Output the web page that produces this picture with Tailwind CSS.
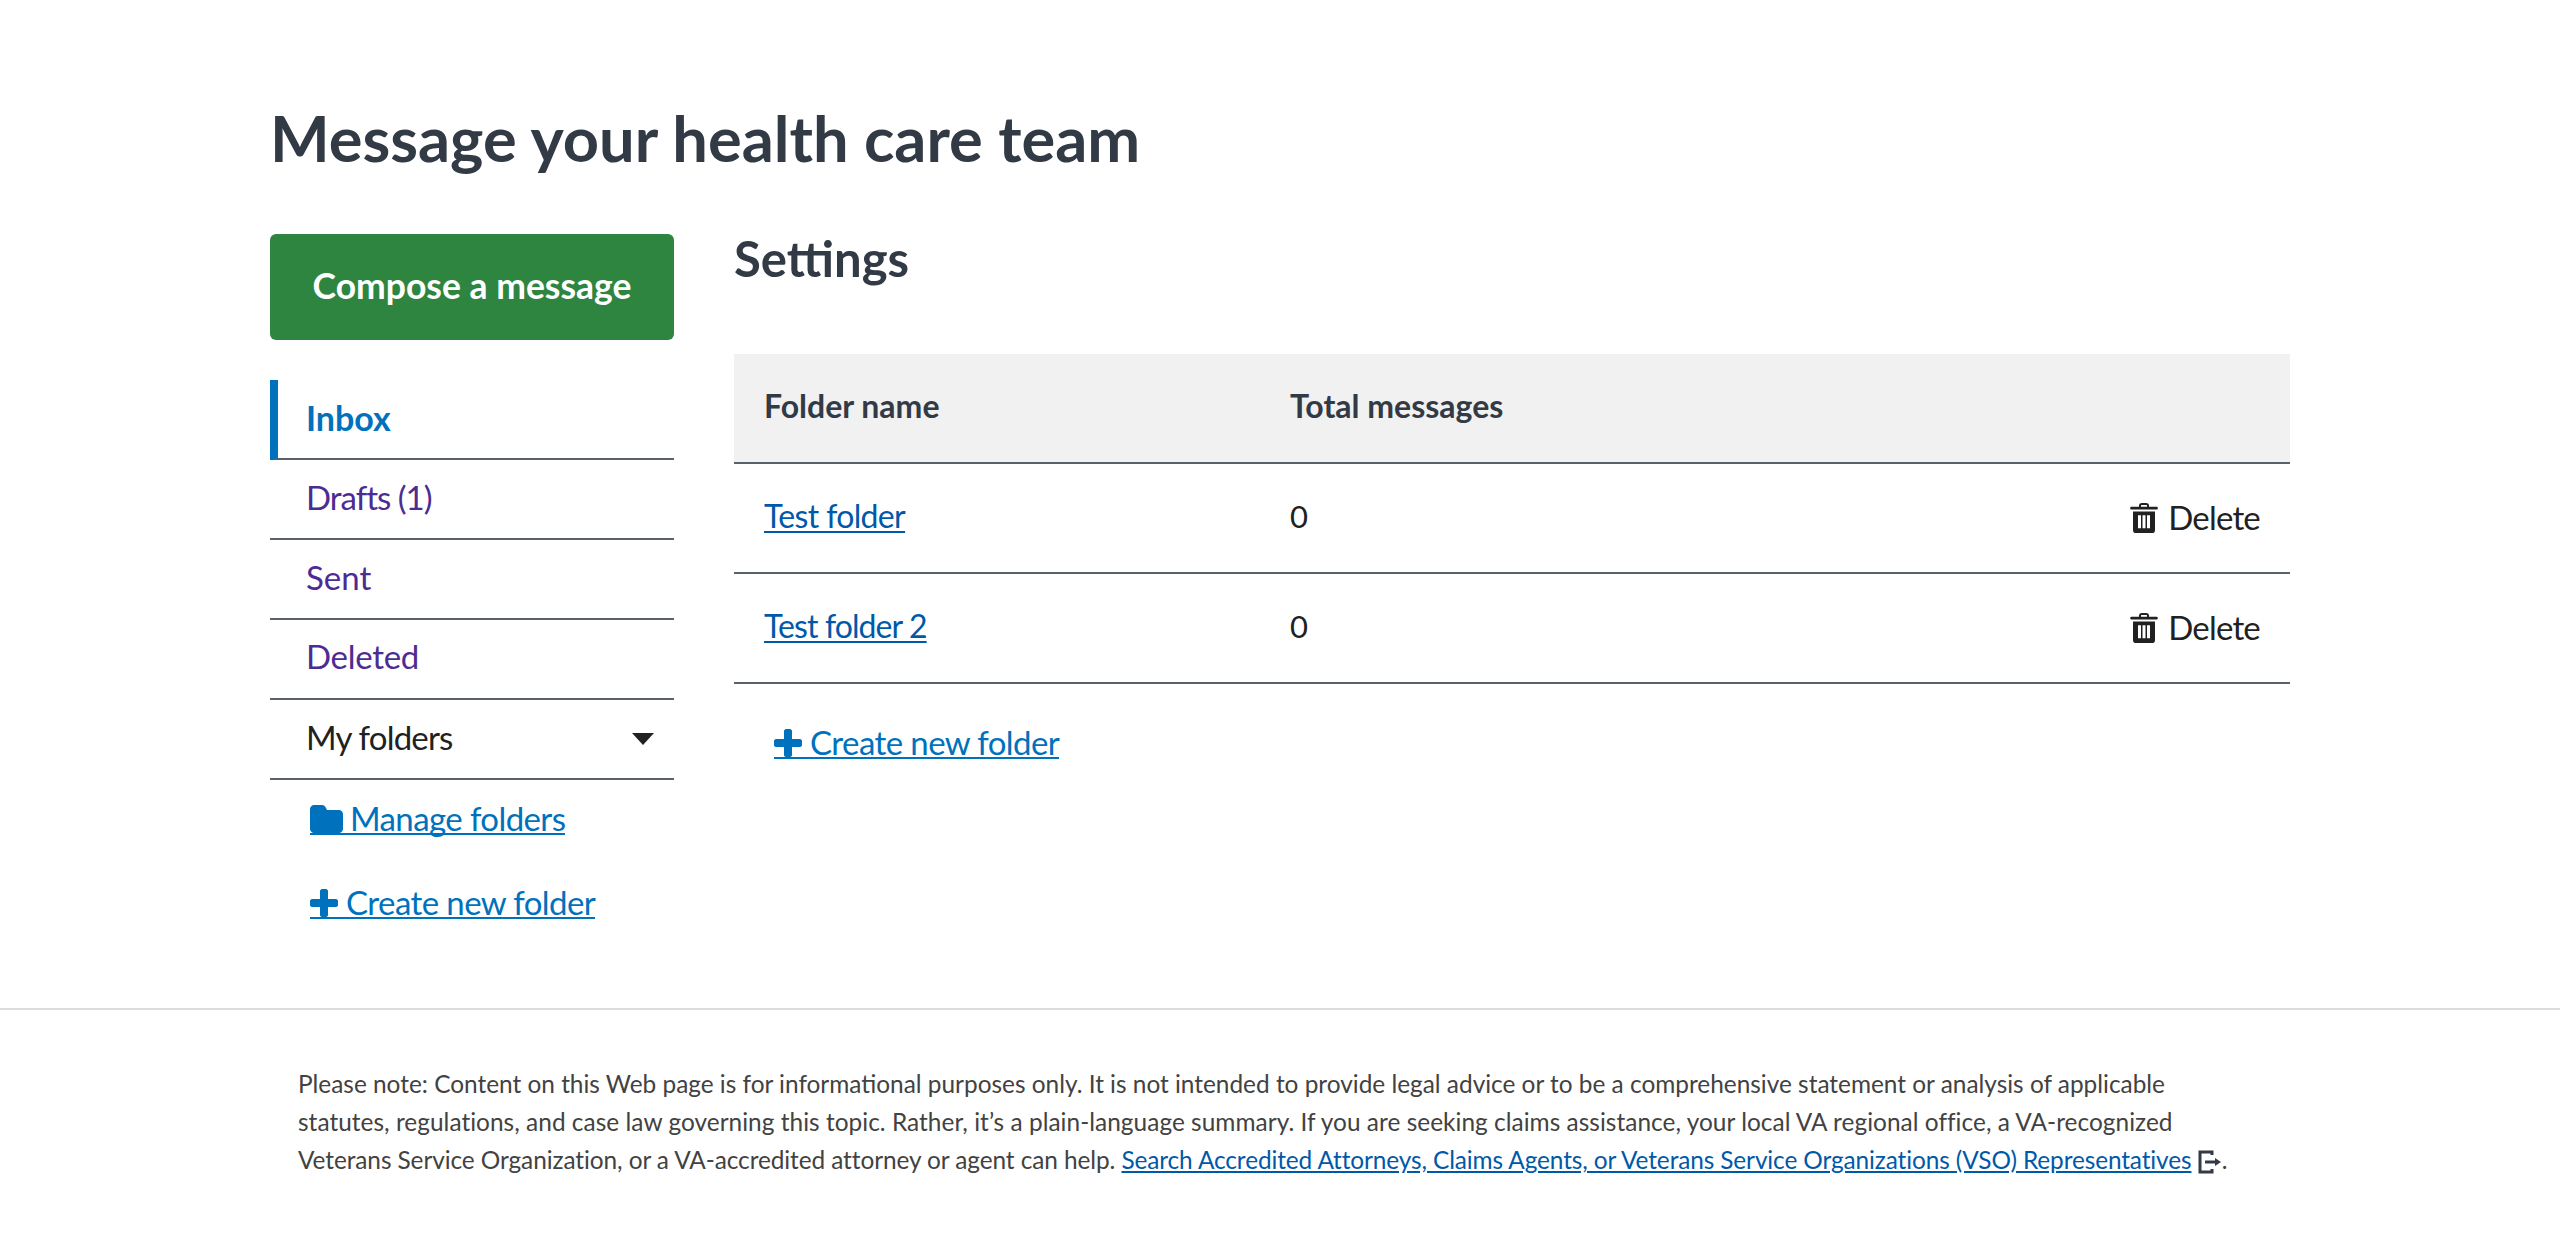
<!DOCTYPE html>
<html lang="en">

<head>
  <meta charset="UTF-8">
  <meta name="viewport" content="width=device-width, initial-scale=1.0">
  <title>Message your health care team</title>
  <script src="https://cdn.jsdelivr.net/npm/@tailwindcss/browser@4"></script>
</head>

<body class="w-full bg-white font-['Lato','Liberation_Sans',sans-serif] text-[#212121]">
  <main class="ml-[270px] w-[2020px] h-[1008px] pt-[104px]">
    <h1 class="h-[70px] text-[63.200px] leading-[68px] font-bold text-[#323a45]">Message your health care team</h1>

    <div class="flex mt-[60px]">
      <!-- Sidebar -->
      <aside class="w-[404px] mr-[60px] text-[33px]">
        <button class="w-full h-[106px] pb-[3px] rounded-[6px] bg-[#2e8540] text-white font-bold text-[35.500px]">Compose a message</button>
        <nav class="mt-[40px]">
          <a href="#" class="flex items-center h-[80px] pb-[4px] pl-[28px] border-l-[8px] border-l-[#0071bc] border-b-2 border-b-[#5b616b] text-[34px] font-bold text-[#0071bc]">Inbox</a>
          <a href="#" class="flex items-center h-[80px] pb-[3px] pl-[36px] border-b-2 border-[#5b616b] text-[#4c2c92] tracking-[-1px]">Drafts (1)</a>
          <a href="#" class="flex items-center h-[80px] pb-[3px] pl-[36px] border-b-2 border-[#5b616b] text-[#4c2c92]">Sent</a>
          <a href="#" class="flex items-center h-[80px] pb-[4px] pl-[36px] border-b-2 border-[#5b616b] text-[#4c2c92] tracking-[-0.3px]">Deleted</a>
          <div class="flex items-center justify-between h-[80px] pb-[3px] pl-[36px] pr-[20px] border-b-2 border-[#5b616b]">
            <span class="tracking-[-0.8px]">My folders</span>
            <svg class="w-[22px] h-[12px] mt-[3px]" viewBox="0 0 22 12"><path fill="#212121" d="M0 0h22L11 12z" /></svg>
          </div>
        </nav>
        <a href="#" class="flex w-fit mt-[23px] ml-[40px] items-end gap-[7px] border-b-2 border-[#0071bc] text-[#0071bc] tracking-[-0.6px]">
          <svg class="w-[33px] h-[28px]" viewBox="0 0 33 28"><path fill="#0071bc" d="M4 0h8c2 0 3 1 4 3l1 2h12c2 0 4 2 4 4v15c0 2-2 4-4 4H4c-2 0-4-2-4-4V4c0-2 2-4 4-4z" /></svg>
          <span class="leading-[30px]">Manage folders</span>
        </a>
        <a href="#" class="flex w-fit mt-[52px] ml-[40px] items-end gap-[8px] border-b-2 border-[#0071bc] text-[#0071bc] tracking-[-0.6px]">
          <svg class="w-[28px] h-[28px]" viewBox="0 0 28 28"><path fill="#0071bc" d="M10 2c0-1 1-2 2-2h4c1 0 2 1 2 2v8h8c1 0 2 1 2 2v4c0 1-1 2-2 2h-8v8c0 1-1 2-2 2h-4c-1 0-2-1-2-2v-8H2c-1 0-2-1-2-2v-4c0-1 1-2 2-2h8z" /></svg>
          <span class="leading-[30px]">Create new folder</span>
        </a>
      </aside>

      <!-- Settings -->
      <section class="w-[1556px] text-[33px]">
        <h2 class="h-[50px] -mt-[1px] text-[49px] leading-[50px] font-bold text-[#323a45]">Settings</h2>
        <div class="mt-[71px]">
          <div class="flex items-center h-[110px] pb-[4px] px-[30px] bg-[#f1f1f1] border-b-2 border-[#5b616b] text-[32px] font-bold text-[#323a45]">
            <span class="w-[526px]">Folder name</span>
            <span>Total messages</span>
          </div>
          <div class="flex items-center h-[110px] pb-[4px] px-[30px] border-b-2 border-[#5b616b]">
            <a href="#" class="w-[526px] text-[32px] tracking-[-0.65px] text-[#0059a8] underline underline-offset-[3px] decoration-2">Test folder</a>
            <span class="flex-1 text-[31px]">0</span>
            <span class="flex items-center gap-[10px] mt-[4px]">
              <svg class="w-[28px] h-[30px]" viewBox="0 0 28 32" preserveAspectRatio="none"><path fill="#212121" fill-rule="evenodd" d="M9 3c0-2 1-3 3-3h4c2 0 3 1 3 3v1h8c1 0 1 3 0 3H1C0 7 0 4 1 4h8zm2 0v1h6V3c0-.5 0-1-1-1h-4c-1 0-1 .5-1 1zM3 9h22v20c0 2-1 3-3 3H6c-2 0-3-1-3-3zm5 4v14h3V13zm4.500 0v14h3V13zm4.500 0v14h3V13z" /></svg>
              <span class="tracking-[-0.8px]">Delete</span>
            </span>
          </div>
          <div class="flex items-center h-[110px] pb-[4px] px-[30px] border-b-2 border-[#5b616b]">
            <a href="#" class="w-[526px] text-[32px] tracking-[-0.9px] text-[#0059a8] underline underline-offset-[3px] decoration-2">Test folder 2</a>
            <span class="flex-1 text-[31px]">0</span>
            <span class="flex items-center gap-[10px] mt-[4px]">
              <svg class="w-[28px] h-[30px]" viewBox="0 0 28 32" preserveAspectRatio="none"><path fill="#212121" fill-rule="evenodd" d="M9 3c0-2 1-3 3-3h4c2 0 3 1 3 3v1h8c1 0 1 3 0 3H1C0 7 0 4 1 4h8zm2 0v1h6V3c0-.5 0-1-1-1h-4c-1 0-1 .5-1 1zM3 9h22v20c0 2-1 3-3 3H6c-2 0-3-1-3-3zm5 4v14h3V13zm4.500 0v14h3V13zm4.500 0v14h3V13z" /></svg>
              <span class="tracking-[-0.8px]">Delete</span>
            </span>
          </div>
        </div>
        <a href="#" class="flex w-fit mt-[43px] ml-[40px] items-end gap-[8px] border-b-2 border-[#0071bc] text-[#0071bc] tracking-[-0.6px]">
          <svg class="w-[28px] h-[28px]" viewBox="0 0 28 28"><path fill="#0071bc" d="M10 2c0-1 1-2 2-2h4c1 0 2 1 2 2v8h8c1 0 2 1 2 2v4c0 1-1 2-2 2h-8v8c0 1-1 2-2 2h-4c-1 0-2-1-2-2v-8H2c-1 0-2-1-2-2v-4c0-1 1-2 2-2h8z" /></svg>
          <span class="leading-[30px]">Create new folder</span>
        </a>
      </section>
    </div>
  </main>

  <!-- Footer note -->
  <footer class="border-t-2 border-[#dcdcdc] h-[230px] pt-[55px] pl-[298px] text-[24.400px] leading-[38px] text-[#424242] whitespace-nowrap">
    <p>Please note: Content on this Web page is for informational purposes only. It is not intended to provide legal advice or to be a comprehensive statement or analysis of applicable<br>
      <span class="tracking-[0.04px]">statutes, regulations, and case law governing this topic. Rather, it’s a plain-language summary. If you are seeking claims assistance, your local VA regional office, a VA-recognized</span><br>
      <span class="tracking-[-0.08px]">Veterans Service Organization, or a VA-accredited attorney or agent can help.</span> <a href="#" class="text-[#0059a8] underline tracking-[-0.11px]">Search Accredited Attorneys, Claims Agents, or Veterans Service Organizations (VSO) Representatives</a>
      <svg class="inline w-[24px] h-[24px] align-[-5px]" viewBox="0 0 24 24" fill="none" stroke="#323a45" stroke-width="3"><path d="M14 5V2H2v20h12v-3" /><path d="M7 12h11" /><path fill="#323a45" stroke="none" d="M17 8l6 4-6 4z" /></svg>.</p>
  </footer>
</body>

</html>
